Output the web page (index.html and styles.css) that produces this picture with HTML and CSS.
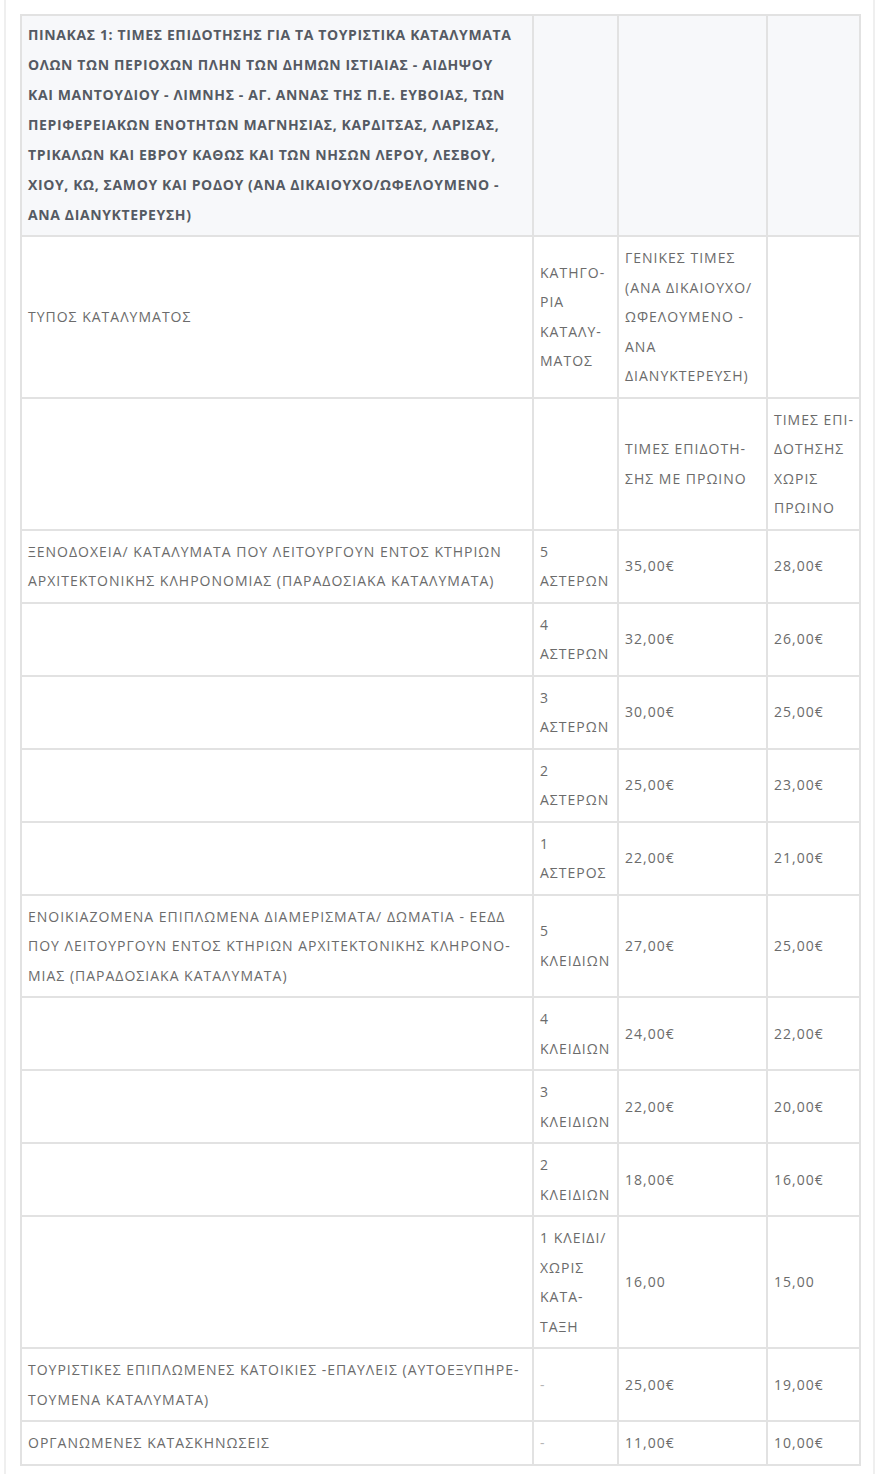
FILE: index.html
```html
<!DOCTYPE html>
<html lang="el">
<head>
<meta charset="utf-8">
<title>Πίνακας 1</title>
<link rel="stylesheet" href="styles.css">
</head>
<body>
<div class="frame">
<table class="rates">
<colgroup>
<col class="c1"><col class="c2"><col class="c3"><col class="c4">
</colgroup>
<tbody>
<tr class="head">
<td>ΠΙΝΑΚΑΣ 1: ΤΙΜΕΣ ΕΠΙΔΟΤΗΣΗΣ ΓΙΑ ΤΑ ΤΟΥΡΙΣΤΙΚΑ ΚΑΤΑΛΥΜΑΤΑ<br>ΟΛΩΝ ΤΩΝ ΠΕΡΙΟΧΩΝ ΠΛΗΝ ΤΩΝ ΔΗΜΩΝ ΙΣΤΙΑΙΑΣ - ΑΙΔΗΨΟΥ<br>ΚΑΙ ΜΑΝΤΟΥΔΙΟΥ - ΛΙΜΝΗΣ - ΑΓ. ΑΝΝΑΣ ΤΗΣ Π.Ε. ΕΥΒΟΙΑΣ, ΤΩΝ<br>ΠΕΡΙΦΕΡΕΙΑΚΩΝ ΕΝΟΤΗΤΩΝ ΜΑΓΝΗΣΙΑΣ, ΚΑΡΔΙΤΣΑΣ, ΛΑΡΙΣΑΣ,<br>ΤΡΙΚΑΛΩΝ ΚΑΙ ΕΒΡΟΥ ΚΑΘΩΣ ΚΑΙ ΤΩΝ ΝΗΣΩΝ ΛΕΡΟΥ, ΛΕΣΒΟΥ,<br>ΧΙΟΥ, ΚΩ, ΣΑΜΟΥ ΚΑΙ ΡΟΔΟΥ (ΑΝΑ ΔΙΚΑΙΟΥΧΟ/ΩΦΕΛΟΥΜΕΝΟ -<br>ΑΝΑ ΔΙΑΝΥΚΤΕΡΕΥΣΗ)</td>
<td></td><td></td><td></td>
</tr>
<tr>
<td>ΤΥΠΟΣ ΚΑΤΑΛΥΜΑΤΟΣ</td>
<td>ΚΑΤΗΓΟ-<br>ΡΙΑ<br>ΚΑΤΑΛΥ-<br>ΜΑΤΟΣ</td>
<td>ΓΕΝΙΚΕΣ ΤΙΜΕΣ<br>(ΑΝΑ ΔΙΚΑΙΟΥΧΟ/<br>ΩΦΕΛΟΥΜΕΝΟ -<br>ΑΝΑ<br>ΔΙΑΝΥΚΤΕΡΕΥΣΗ)</td>
<td></td>
</tr>
<tr>
<td></td>
<td></td>
<td>ΤΙΜΕΣ ΕΠΙΔΟΤΗ-<br>ΣΗΣ ΜΕ ΠΡΩΙΝΟ</td>
<td>ΤΙΜΕΣ ΕΠΙ-<br>ΔΟΤΗΣΗΣ<br>ΧΩΡΙΣ<br>ΠΡΩΙΝΟ</td>
</tr>
<tr>
<td>ΞΕΝΟΔΟΧΕΙΑ/ ΚΑΤΑΛΥΜΑΤΑ ΠΟΥ ΛΕΙΤΟΥΡΓΟΥΝ ΕΝΤΟΣ ΚΤΗΡΙΩΝ<br>ΑΡΧΙΤΕΚΤΟΝΙΚΗΣ ΚΛΗΡΟΝΟΜΙΑΣ (ΠΑΡΑΔΟΣΙΑΚΑ ΚΑΤΑΛΥΜΑΤΑ)</td>
<td>5<br>ΑΣΤΕΡΩΝ</td><td>35,00€</td><td>28,00€</td>
</tr>
<tr><td></td><td>4<br>ΑΣΤΕΡΩΝ</td><td>32,00€</td><td>26,00€</td></tr>
<tr><td></td><td>3<br>ΑΣΤΕΡΩΝ</td><td>30,00€</td><td>25,00€</td></tr>
<tr><td></td><td>2<br>ΑΣΤΕΡΩΝ</td><td>25,00€</td><td>23,00€</td></tr>
<tr><td></td><td>1<br>ΑΣΤΕΡΟΣ</td><td>22,00€</td><td>21,00€</td></tr>
<tr>
<td>ΕΝΟΙΚΙΑΖΟΜΕΝΑ ΕΠΙΠΛΩΜΕΝΑ ΔΙΑΜΕΡΙΣΜΑΤΑ/ ΔΩΜΑΤΙΑ - ΕΕΔΔ<br>ΠΟΥ ΛΕΙΤΟΥΡΓΟΥΝ ΕΝΤΟΣ ΚΤΗΡΙΩΝ ΑΡΧΙΤΕΚΤΟΝΙΚΗΣ ΚΛΗΡΟΝΟ-<br>ΜΙΑΣ (ΠΑΡΑΔΟΣΙΑΚΑ ΚΑΤΑΛΥΜΑΤΑ)</td>
<td>5<br>ΚΛΕΙΔΙΩΝ</td><td>27,00€</td><td>25,00€</td>
</tr>
<tr><td></td><td>4<br>ΚΛΕΙΔΙΩΝ</td><td>24,00€</td><td>22,00€</td></tr>
<tr><td></td><td>3<br>ΚΛΕΙΔΙΩΝ</td><td>22,00€</td><td>20,00€</td></tr>
<tr><td></td><td>2<br>ΚΛΕΙΔΙΩΝ</td><td>18,00€</td><td>16,00€</td></tr>
<tr><td></td><td>1 ΚΛΕΙΔΙ/<br>ΧΩΡΙΣ<br>ΚΑΤΑ-<br>ΤΑΞΗ</td><td>16,00</td><td>15,00</td></tr>
<tr>
<td>ΤΟΥΡΙΣΤΙΚΕΣ ΕΠΙΠΛΩΜΕΝΕΣ ΚΑΤΟΙΚΙΕΣ -ΕΠΑΥΛΕΙΣ (ΑΥΤΟΕΞΥΠΗΡΕ-<br>ΤΟΥΜΕΝΑ ΚΑΤΑΛΥΜΑΤΑ)</td>
<td class="dash">-</td><td>25,00€</td><td>19,00€</td>
</tr>
<tr><td>ΟΡΓΑΝΩΜΕΝΕΣ ΚΑΤΑΣΚΗΝΩΣΕΙΣ</td><td class="dash">-</td><td>11,00€</td><td>10,00€</td></tr>
</tbody>
</table>
</div>
</body>
</html>
```

FILE: styles.css
```css
html, body {
  margin: 0;
  padding: 0;
  background: #ffffff;
}

.frame {
  margin-left: 4px;
  width: 871px;
  min-height: 1474px;
  box-sizing: border-box;
  border-left: 2px solid #efefef;
  border-right: 2px solid #efefef;
  padding: 14px 0 0 14px;
}

.rates {
  width: 839px;
  table-layout: fixed;
  border-collapse: collapse;
  font-family: "Open Sans", "Liberation Sans", sans-serif;
  font-size: 14px;
  letter-spacing: 1px;
  line-height: 29.5px;
  color: #6b6b6b;
}

.c1 { width: 512px; }
.c2 { width: 85px; }
.c3 { width: 149px; }
.c4 { width: 93px; }

.rates td {
  border: 2px solid #e2e2e2;
  padding: 6px 5px 6px 6px;
  vertical-align: middle;
  text-align: left;
  white-space: nowrap;
  overflow: visible;
}

.rates .head td {
  background: #f7f8fa;
  font-weight: 700;
  color: #555a63;
  line-height: 30px;
  letter-spacing: 0.62px;
  padding-top: 4px;
  padding-bottom: 5px;
}

.rates td.dash {
  color: #b5b5b5;
}
```
